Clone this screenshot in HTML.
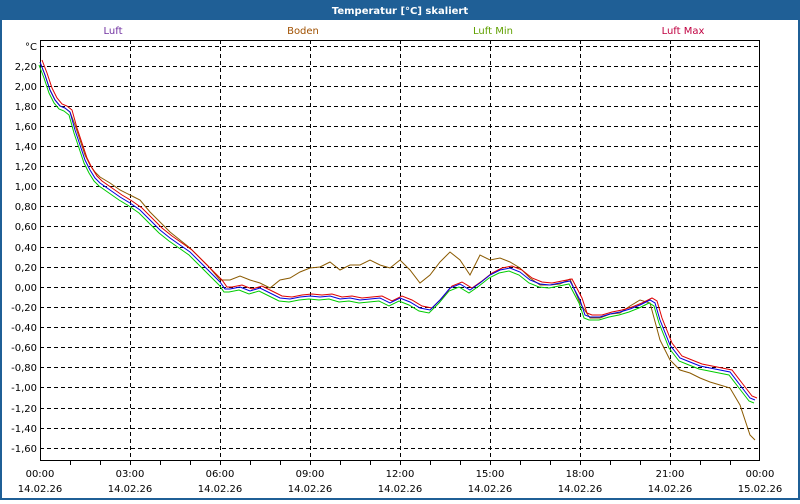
<!DOCTYPE html>
<html><head><meta charset="utf-8"><style>
body{margin:0;width:800px;height:500px;overflow:hidden;background:#fff;font-family:"DejaVu Sans","Liberation Sans",sans-serif}
</style></head><body>
<svg width="800" height="500" xmlns="http://www.w3.org/2000/svg" font-family="DejaVu Sans, Liberation Sans, sans-serif" font-size="10">
<rect x="0" y="0" width="800" height="500" fill="#1f5f96"/>
<rect x="2" y="20" width="796" height="478" fill="#fff"/>
<text x="400" y="14" fill="#fff" font-weight="bold" font-size="10" text-anchor="middle">Temperatur [°C] skaliert</text>
<text x="113" y="34" fill="#7030a0" text-anchor="middle">Luft</text>
<text x="303" y="34" fill="#a05000" text-anchor="middle">Boden</text>
<text x="493" y="34" fill="#60a000" text-anchor="middle">Luft Min</text>
<text x="683" y="34" fill="#c00040" text-anchor="middle">Luft Max</text>
<g stroke="#000" stroke-width="1" stroke-dasharray="4,3" shape-rendering="crispEdges">
<line x1="40" x2="760" y1="46.5" y2="46.5"/><line x1="40" x2="760" y1="66.5" y2="66.5"/><line x1="40" x2="760" y1="86.5" y2="86.5"/><line x1="40" x2="760" y1="106.5" y2="106.5"/><line x1="40" x2="760" y1="126.5" y2="126.5"/><line x1="40" x2="760" y1="146.5" y2="146.5"/><line x1="40" x2="760" y1="166.5" y2="166.5"/><line x1="40" x2="760" y1="186.5" y2="186.5"/><line x1="40" x2="760" y1="206.5" y2="206.5"/><line x1="40" x2="760" y1="226.5" y2="226.5"/><line x1="40" x2="760" y1="247.5" y2="247.5"/><line x1="40" x2="760" y1="267.5" y2="267.5"/><line x1="40" x2="760" y1="287.5" y2="287.5"/><line x1="40" x2="760" y1="307.5" y2="307.5"/><line x1="40" x2="760" y1="327.5" y2="327.5"/><line x1="40" x2="760" y1="347.5" y2="347.5"/><line x1="40" x2="760" y1="367.5" y2="367.5"/><line x1="40" x2="760" y1="387.5" y2="387.5"/><line x1="40" x2="760" y1="408.5" y2="408.5"/><line x1="40" x2="760" y1="428.5" y2="428.5"/><line x1="40" x2="760" y1="448.5" y2="448.5"/>
<line x1="130.5" x2="130.5" y1="40" y2="460"/><line x1="220.5" x2="220.5" y1="40" y2="460"/><line x1="310.5" x2="310.5" y1="40" y2="460"/><line x1="400.5" x2="400.5" y1="40" y2="460"/><line x1="490.5" x2="490.5" y1="40" y2="460"/><line x1="580.5" x2="580.5" y1="40" y2="460"/><line x1="670.5" x2="670.5" y1="40" y2="460"/>
</g>
<g stroke="#000" stroke-width="1" shape-rendering="crispEdges">
<line x1="40.5" x2="40.5" y1="40" y2="461"/><line x1="759.5" x2="759.5" y1="40" y2="461"/>
<line x1="40" x2="760" y1="40.5" y2="40.5"/><line x1="40" x2="760" y1="460.5" y2="460.5"/>
<path d="M70.5 460v5M100.5 460v5M130.5 460v5M160.5 460v5M190.5 460v5M220.5 460v5M250.5 460v5M280.5 460v5M310.5 460v5M340.5 460v5M370.5 460v5M400.5 460v5M430.5 460v5M460.5 460v5M490.5 460v5M520.5 460v5M550.5 460v5M580.5 460v5M610.5 460v5M640.5 460v5M670.5 460v5M700.5 460v5M730.5 460v5"/>
</g>
<g text-anchor="end" fill="#000">
<text x="37" y="50">°C</text><text x="37" y="70">2,20</text><text x="37" y="90">2,00</text><text x="37" y="110">1,80</text><text x="37" y="130">1,60</text><text x="37" y="150">1,40</text><text x="37" y="170">1,20</text><text x="37" y="190">1,00</text><text x="37" y="210">0,80</text><text x="37" y="230">0,60</text><text x="37" y="251">0,40</text><text x="37" y="271">0,20</text><text x="37" y="291">0,00</text><text x="37" y="311">-0,20</text><text x="37" y="331">-0,40</text><text x="37" y="351">-0,60</text><text x="37" y="371">-0,80</text><text x="37" y="391">-1,00</text><text x="37" y="412">-1,20</text><text x="37" y="432">-1,40</text><text x="37" y="452">-1,60</text>
</g>
<g text-anchor="middle" fill="#000">
<text x="40" y="477">00:00</text><text x="40" y="492">14.02.26</text>
<text x="130" y="477">03:00</text><text x="130" y="492">14.02.26</text>
<text x="220" y="477">06:00</text><text x="220" y="492">14.02.26</text>
<text x="310" y="477">09:00</text><text x="310" y="492">14.02.26</text>
<text x="400" y="477">12:00</text><text x="400" y="492">14.02.26</text>
<text x="490" y="477">15:00</text><text x="490" y="492">14.02.26</text>
<text x="580" y="477">18:00</text><text x="580" y="492">14.02.26</text>
<text x="670" y="477">21:00</text><text x="670" y="492">14.02.26</text>
<text x="760" y="477">00:00</text><text x="760" y="492">15.02.26</text>
</g>
<defs>
<polyline id="m" fill="none" points="40,62 45,75 50,90 55,100 60,106 65,108 70,112 75,130 80,145 85,160 90,170 95,178 100,183 110,190 120,197 130,203 140,210 150,220 160,230 170,238 180,245 190,252 200,262 210,272 220,282 225,289 230,289 240,287 250,291 260,288 270,293 280,298 290,299 300,297 310,296 320,297 330,296 340,299 350,298 360,300 370,299 380,298 390,303 400,298 410,302 420,308 430,310 440,300 450,288 460,284 470,290 480,283 490,275 500,270 510,268 520,272 530,280 540,284 550,285 560,283 570,281 580,300 585,315 590,317 600,317 610,314 620,312 630,309 640,305 650,300 655,303 660,320 670,345 680,358 690,362 700,366 710,368 720,370 730,372 740,385 750,398 755,400"/>
</defs>
<polyline fill="none" stroke="#8b5a00" points="40,62 45,75 50,90 55,100 60,106 65,108 70,112 75,125 80,140 85,155 90,165 95,172 100,177 110,183 120,190 130,195 140,200 150,212 160,222 170,232 180,240 190,248 200,258 210,268 220,280 230,280 240,276 250,280 260,283 270,288 280,280 290,278 300,272 310,268 320,267 330,262 340,270 350,265 360,265 370,260 380,265 390,268 400,260 410,270 420,283 430,275 440,262 450,252 460,260 470,275 480,255 490,260 500,258 510,262 520,268 530,278 540,285 550,285 560,284 570,279 580,303 590,318 600,318 610,314 620,313 630,306 640,300 650,303 660,340 670,360 680,370 690,373 700,378 710,382 720,385 730,388 740,405 750,435 755,440"/>
<use href="#m" stroke="#00cc00" transform="translate(-1,3)"/>
<use href="#m" stroke="#e00000" transform="translate(2,-2)"/>
<use href="#m" stroke="#0000e0"/>
</svg>
</body></html>
